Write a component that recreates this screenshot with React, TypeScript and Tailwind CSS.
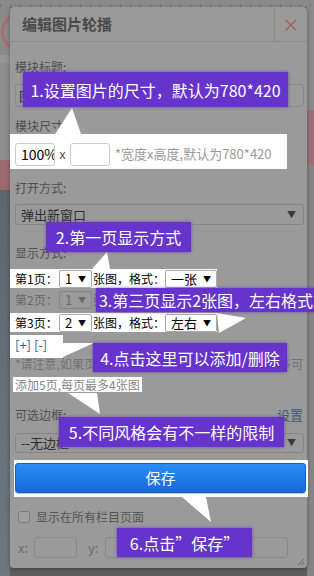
import React from "react";

// tutorial overlay: dimmed dialog, white highlighted parts, purple callouts

function SmallSelect({ value, w, dim }: { value: string; w: string; dim?: boolean }) {
  return (
    <span
      className={`${w} h-[18px] flex items-center justify-between pl-[5px] pr-[5px] rounded-[2px] border text-[13px] leading-[16px] ${
        dim ? "border-[#858585] text-[#6a6a6a]" : "border-[#a9a9a9] text-black"
      }`}
    >
      <span className="whitespace-nowrap">{value}</span>
      <span className="text-[8px]">▼</span>
    </span>
  );
}

function PageRow({ n, count, style, dim }: { n: number; count: string; style: string; dim?: boolean }) {
  return (
    <div
      className={`flex items-center text-[12px] ${
        dim ? "h-[24px] text-[#676767]" : "h-[19px] -ml-[5px] w-[207px] pl-[5px] bg-white text-black"
      }`}
    >
      <span className="w-[44px]">第{n}页：</span>
      <SmallSelect value={count} w="w-[33px]" dim={dim} />
      <span className="w-[73px] pl-[1px]">张图，格式：</span>
      <SmallSelect value={style} w="w-[52px]" dim={dim} />
    </div>
  );
}

function DimSelect({ text, h }: { text: string; h: string }) {
  return (
    <div className={`${h} flex items-center justify-between pl-[5px] pr-[7px] border border-[#858585] rounded-[3px] text-[13px] text-[#2e2e2e]`}>
      <span>{text}</span>
      <span className="text-[9px] text-[#3a3a3a]">▼</span>
    </div>
  );
}

const CALLOUTS = [
  { text: "1.设置图片的尺寸，默认为780*420", cls: "left-[23px] top-[72px] w-[265px] h-[35px]" },
  { text: "2.第一页显示方式", cls: "left-[46px] top-[222px] w-[145px] h-[30px]" },
  { text: "3.第三页显示2张图，左右格式", cls: "left-[96px] top-[288px] w-[220px] h-[24px]" },
  { text: "4.点击这里可以添加/删除", cls: "left-[93px] top-[343px] w-[194px] h-[29px]" },
  { text: "5.不同风格会有不一样的限制", cls: "left-[59px] top-[417px] w-[225px] h-[30px]" },
  { text: "6.点击”保存”", cls: "left-[117px] top-[528px] w-[135px] h-[29px]" },
];

export default function App() {
  return (
    <div className="relative w-[314px] h-[576px] overflow-hidden bg-[#5f6a73] font-['Noto_Sans_CJK_SC',sans-serif]">
      {/* ruler */}
      <div className="h-[7px] bg-[#8b8b8b] pt-[4px]">
        <div className="h-[3px] bg-[repeating-linear-gradient(90deg,#727272_0px,#727272_1px,transparent_1px,transparent_10px)]" />
      </div>

      <div className="flex h-[569px]">
        {/* page behind, left edge */}
        <div className="w-[10px] flex flex-col overflow-hidden">
          <div className="h-[48px] bg-[#8a8a8a] overflow-hidden pt-[6px] pl-[1px]">
            <div className="w-[38px] h-[38px] rounded-full border-[3px] border-[#b06b72]" />
          </div>
          <div className="h-[8px] bg-[#969696]" />
          <div className="h-[97px] bg-[#8e8e8e]" />
          <div className="h-[30px] bg-[#9b6a70]" />
          <div className="flex-1 bg-gradient-to-b from-[#5c6770] to-[#6d7881]" />
        </div>

        <div className="w-[297px] flex flex-col">
          {/* dialog */}
          <div className="relative h-[561px] bg-[#9a9a9a] rounded-[4px] shadow-[0_1px_4px_rgba(0,0,0,0.35)] flex flex-col">
            <div className="h-[35px] flex border-b border-[#888888]">
              <div className="flex-1 pl-[12px] flex items-center text-[15px] font-bold text-[#4a4a4a]">编辑图片轮播</div>
              <div className="w-[33px] border-l border-[#888888] flex items-center justify-center text-[18px] leading-none text-[#a55a5e]">×</div>
            </div>

            <div className="pl-[5px] pr-[3px] flex flex-col text-[12px] text-[#4f4f4f]">
              <div className="mt-[16px] h-[18px] leading-[18px]">模块标题:</div>
              <div className="mt-[8px] h-[23px] border border-[#888888] rounded-[3px] pl-[3px] text-[13px] leading-[21px] text-[#333]">图片轮播</div>

              <div className="mt-[10px] h-[17px] leading-[17px]">模块尺寸:</div>
              <div className="-ml-[5px] w-[277px] h-[35px] bg-white pl-[5px] pt-[9px] flex items-start text-[13px]">
                <div className="w-[40px] h-[23px] border border-[#cccccc] rounded-[3px] pl-[5px] text-[14px] leading-[21px] text-black overflow-hidden whitespace-nowrap">100%</div>
                <span className="w-[15px] h-[23px] leading-[21px] text-center text-[#555]">x</span>
                <div className="w-[40px] h-[23px] border border-[#cccccc] rounded-[3px]" />
                <span className="ml-[5px] h-[23px] leading-[22px] text-[#9a9a9a] whitespace-nowrap">*宽度x高度,默认为780*420</span>
              </div>

              <div className="mt-[10px] h-[18px] leading-[18px]">打开方式:</div>
              <div className="mt-[7px]">
                <DimSelect text="弹出新窗口" h="h-[21px]" />
              </div>

              <div className="mt-[19px] h-[18px] leading-[18px]">显示方式:</div>
              <div className="mt-[7px]">
                <PageRow n={1} count="1" style="一张" />
              </div>
              <PageRow n={2} count="1" style="一张" dim />
              <div className="mt-[1px]">
                <PageRow n={3} count="2" style="左右" />
              </div>

              <div className="mt-[3px] -ml-[5px] w-[53px] h-[23px] bg-white pl-[5px] text-[13px] leading-[20px] text-[#2f62a0]">[+] [-]</div>

              <div className="-mt-[5px] text-[12px] text-[#727272] whitespace-nowrap">
                <div className="h-[21px] leading-[21px]">*请注意,如果页面风格选择的是左右格式的话,则最多可</div>
                <div className="h-[21px] flex items-center">
                  <span className="-ml-[2px] px-[2px] h-[15px] leading-[15px] bg-white text-[#858585]">添加5页,每页最多4张图</span>
                </div>
              </div>

              <div className="mt-[11px] h-[18px] leading-[18px] flex justify-between">
                <span>可选边框:</span>
                <span className="pr-[1px] text-[13px] text-[#3d5a75]">设置</span>
              </div>
              <div className="mt-[9px]">
                <DimSelect text="--无边框" h="h-[20px]" />
              </div>

              <div className="mt-[7px] -ml-[1px] w-[294px] bg-white pt-[3px] pb-[4px] pl-[1px] pr-[2px]">
                <div className="h-[30px] rounded-[3px] border border-[#165fc6] bg-gradient-to-b from-[#2a8df7] to-[#1668d9] flex items-center justify-center text-[15px] text-white shadow-[0_1px_1px_rgba(0,0,0,0.25)]">保存</div>
              </div>

              <div className="mt-[11px] h-[18px] flex items-center pl-[3px]">
                <span className="w-[12px] h-[12px] border border-[#7e7e7e] rounded-[2px] bg-[#a0a0a0]" />
                <span className="ml-[6px] text-[#555]">显示在所有栏目页面</span>
              </div>

              <div className="mt-[11px] h-[21px] flex items-center pl-[3px] text-[13px] text-[#6a6a6a]">
                <span className="w-[16px]">x:</span>
                <span className="w-[43px] h-[21px] border border-[#888888] rounded-[3px]" />
                <span className="ml-[11px] w-[17px]">y:</span>
                <span className="w-[183px] h-[21px] border border-[#888888] rounded-[3px]" />
              </div>
            </div>

            <svg className="absolute right-[2px] bottom-[2px]" width="8" height="8" viewBox="0 0 8 8">
              <path d="M7 1L1 7M7 4L4 7M7 6.5L6.5 7" stroke="#6a6a6a" strokeWidth="1" />
            </svg>
          </div>
          <div className="flex-1 bg-[#5d5d5d]" />
        </div>

        {/* page behind, right edge */}
        <div className="flex-1 flex flex-col">
          <div className="h-[103px] bg-[#8a8a8a]" />
          <div className="h-[55px] bg-[#9a7077]" />
          <div className="flex-1 bg-[#858585]" />
        </div>
      </div>

      {/* white pointers */}
      <svg className="absolute left-0 top-0" width="314" height="576" viewBox="0 0 314 576">
        <g fill="#ffffff">
          <polygon points="72,108 55,134 81,134" />
          <polygon points="107,252 92,269 110,269" />
          <polygon points="217,313 246,318 219,333" />
          <polygon points="63,343 94,343 63,357" />
          <polygon points="68,393 97,393 100,414" />
          <polygon points="182,497 206,497 211,522" />
        </g>
      </svg>

      {CALLOUTS.map((c) => (
        <div
          key={c.text}
          className={`absolute ${c.cls} bg-[#6633cc] text-white text-[16px] leading-none flex items-center justify-center whitespace-nowrap shadow-[0_0_3px_rgba(90,40,180,0.7)]`}
        >
          {c.text}
        </div>
      ))}
    </div>
  );
}
